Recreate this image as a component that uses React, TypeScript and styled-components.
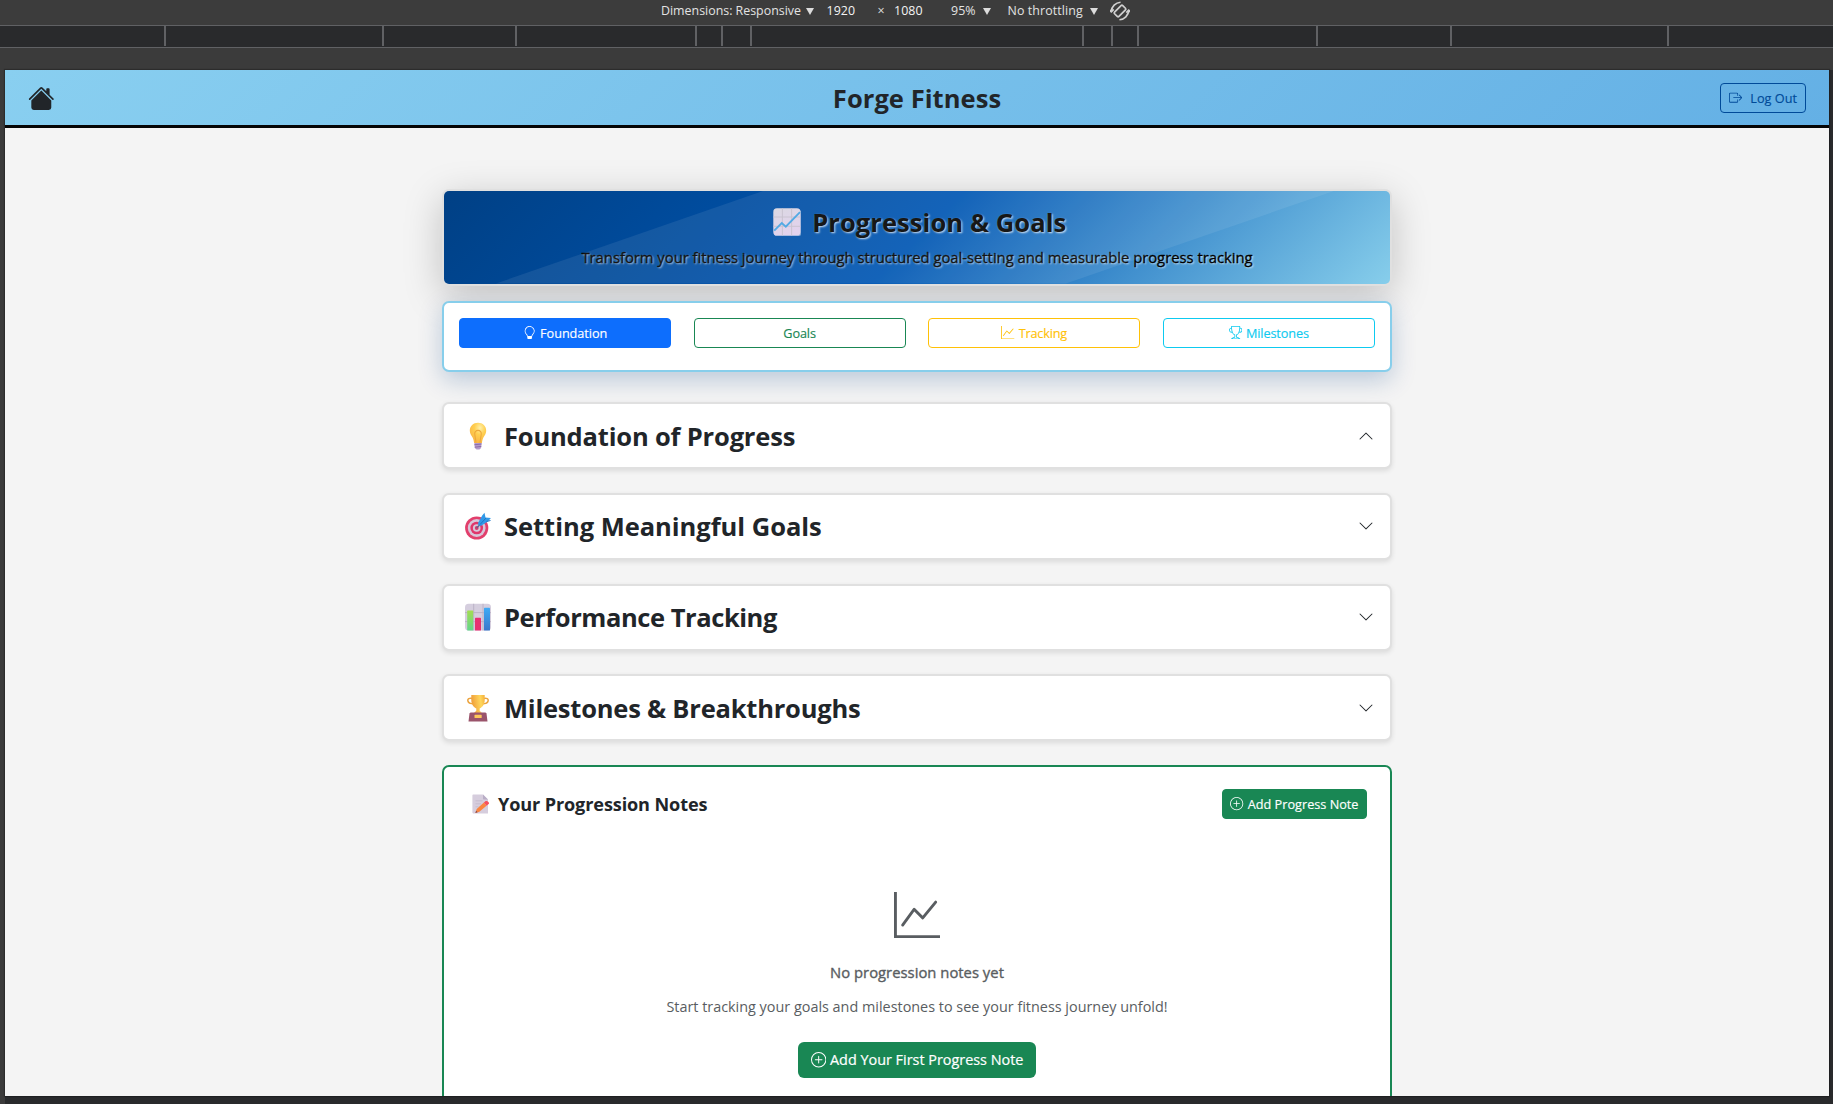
import React from "react";
import styled, { createGlobalStyle, css } from "styled-components";
import {
  BsBoxArrowRight,
  BsChevronDown,
  BsChevronUp,
  BsGraphUp,
  BsHouseFill,
  BsLightbulb,
  BsPlusCircle,
  BsTrophy,
} from "react-icons/bs";

const GlobalStyle = createGlobalStyle`
  *, *::before, *::after { box-sizing: border-box; }
  body {
    margin: 0;
    overflow: hidden;
    background: #292a2c;
    color: #212529;
    font-family: "Open Sans", "Noto Sans", "Liberation Sans", sans-serif;
  }
  svg { display: block; flex: none; }
`;

/* ---------- device emulation chrome ---------- */

const Shell = styled.div`
  display: flex;
  flex-direction: column;
  height: 1104px;
  overflow: hidden;
`;

const DeviceBar = styled.div`
  display: flex;
  align-items: center;
  height: 25px;
  padding: 0 0 3px 661px;
  background: #3c3c3c;
  color: #e3e3e3;
  font-size: 12.4px;
  line-height: 20px;
  white-space: nowrap;
`;

const BarText = styled.span<{ $width: number; $gap?: number; $track?: number; $bright?: boolean }>`
  width: ${(p) => p.$width}px;
  margin-left: ${(p) => p.$gap ?? 0}px;
  letter-spacing: ${(p) => p.$track ?? 0}px;
  color: ${(p) => (p.$bright ? "#f4f4f4" : "inherit")};
`;

const Caret = styled.span`
  margin: 1px 0 0 6px;
  border: 4.5px solid transparent;
  border-top: 7px solid #dcdcdc;
  border-bottom: 0;
`;

const RotateSlot = styled.span`
  margin: -1px 0 0 12px;
`;

const Ruler = styled.div`
  display: flex;
  height: 23px;
  flex: none;
  background: #292a2c;
  border-top: 1px solid #606164;
  border-bottom: 1px solid #606164;
`;

const RulerSpan = styled.div<{ $width: number }>`
  width: ${(p) => p.$width}px;
  height: 20px;
  border-right: 2px solid #606164;
`;

const Stage = styled.div`
  display: flex;
  flex: 1;
  min-height: 0;
  padding: 22px 4px 8px 5px;
  background:
    linear-gradient(#292a2c, #292a2c) right bottom / calc(100% - 5px) 8px no-repeat,
    linear-gradient(#292a2c, #292a2c) right bottom / 4px calc(100% - 22px) no-repeat,
    #3b3b3b;
`;

/* ---------- page ---------- */

const Page = styled.div`
  flex: 1;
  min-width: 0;
  overflow: hidden;
  background: #f4f4f4;
  box-shadow: 0 0 1px 1px rgba(0, 0, 0, 0.25);
`;

const Header = styled.header`
  display: grid;
  grid-template-columns: 1fr auto 1fr;
  align-items: center;
  height: 58px;
  padding: 1px 23px 0;
  border-bottom: 3px solid #050505;
  background: linear-gradient(135deg, #89cff0 0%, #64b0e5 100%);
`;

const headingText = css`
  font-weight: 700;
  font-size: 25.5px;
  line-height: 36px;
  white-space: nowrap;
`;

const Brand = styled.h1`
  ${headingText}
  margin: 0;
  letter-spacing: 0.06px;
`;

const OutlineButton = styled.button<{ $color: string; $filled?: boolean; $track?: number; $gap?: number }>`
  display: flex;
  align-items: center;
  justify-content: center;
  gap: ${(p) => p.$gap ?? 4}px;
  height: 29.5px;
  padding: 0 7.5px;
  border: 1px solid ${(p) => p.$color};
  border-radius: 4px;
  background: ${(p) => (p.$filled ? p.$color : "transparent")};
  color: ${(p) => (p.$filled ? "#fff" : p.$color)};
  font: 400 12.7px/18px "Open Sans", "Noto Sans", sans-serif;
  letter-spacing: ${(p) => p.$track ?? 0}px;
  white-space: nowrap;
  -webkit-text-stroke: 0.15px currentColor;
`;

const LogOut = styled(OutlineButton)`
  justify-self: end;
  width: 86px;
`;

const Column = styled.main`
  display: flex;
  flex-direction: column;
  width: 950px;
  margin: 61px auto 0;
`;

const Banner = styled.section`
  height: 97px;
  border: 2px solid #e0e0e0;
  border-radius: 7px;
  background: #e0e0e0;
  box-shadow: 0 10px 38px rgba(0, 0, 0, 0.21);
`;

const BannerFill = styled.div`
  position: relative;
  display: flex;
  flex-direction: column;
  align-items: center;
  height: 92.5px;
  padding-top: 12.5px;
  border-radius: 5px;
  overflow: hidden;
  color: #040404;
  text-shadow: 1px 1px 2px rgba(255, 255, 255, 0.8);
  background: linear-gradient(135deg, #004085 0%, #0056b3 50%, #87ceeb 100%);

  &::after {
    content: "";
    position: absolute;
    inset: 0;
    background: rgba(255, 255, 255, 0.08);
    clip-path: polygon(319px 0, 890px 0, 622px 100%, 52px 100%);
  }
`;

const BannerTitle = styled.h2`
  ${headingText}
  display: flex;
  align-items: center;
  gap: 11.5px;
  margin: 0 0 6px 5px;
  letter-spacing: 0.08px;
`;

const BannerLead = styled.p`
  margin: 0;
  color: #000;
  font-size: 14.8px;
  line-height: 22px;
  letter-spacing: -0.01px;
  white-space: nowrap;
  -webkit-text-stroke: 0.3px #000;
`;

const TabCard = styled.nav`
  display: grid;
  grid-template-columns: repeat(4, 212px);
  gap: 22.6px;
  align-items: start;
  height: 71px;
  margin-top: 15px;
  padding: 15px;
  border: 2px solid #87ceeb;
  border-radius: 7px;
  background: #fff;
  box-shadow: 0 8px 24px rgba(0, 64, 133, 0.24);
`;

const SectionList = styled.div`
  display: flex;
  flex-direction: column;
  gap: 23.6px;
  margin-top: 30.4px;
`;

const SectionCard = styled.section`
  display: flex;
  align-items: center;
  height: 67px;
  padding: 0 16px 0 21px;
  border: 2px solid #e0e0e0;
  border-radius: 7px;
  background: #fff;
  box-shadow: 0 2px 5px rgba(0, 0, 0, 0.1);
`;

const SectionTitle = styled.h2<{ $track: number }>`
  ${headingText}
  flex: 1;
  margin: 0 0 0 13px;
  letter-spacing: ${(p) => p.$track}px;
`;

const NotesCard = styled.section`
  flex: none;
  height: 420px;
  margin-top: 23.6px;
  padding: 22.5px 23px;
  border: 2px solid #198754;
  border-radius: 7px;
  background: #fff;
`;

const NotesHead = styled.div`
  display: flex;
  align-items: center;
  height: 29.5px;
`;

const NotesTitle = styled.h3`
  flex: 1;
  margin: 0 0 0 8px;
  font-weight: 700;
  font-size: 18.1px;
  line-height: 26px;
  letter-spacing: -0.12px;
`;

const NoteIconSlot = styled.span`
  margin-left: 5px;
`;

const Empty = styled.div`
  display: flex;
  flex-direction: column;
  align-items: center;
  margin-top: 73px;
  color: #595d61;
`;

const EmptyTitle = styled.h4`
  margin: 23.5px 0 0;
  font-weight: 400;
  font-size: 14.8px;
  line-height: 22px;
  letter-spacing: 0.02px;
  -webkit-text-stroke: 0.35px #595d61;
`;

const EmptyText = styled.p`
  margin: 13px 0 0;
  font-size: 14.4px;
  line-height: 22px;
`;

const PrimaryButton = styled.button`
  display: flex;
  align-items: center;
  justify-content: center;
  gap: 4px;
  width: 238px;
  height: 36.5px;
  margin-top: 23.5px;
  border: 0;
  border-radius: 6px;
  background: #198754;
  color: #fff;
  font: 400 14.4px/22px "Open Sans", "Noto Sans", sans-serif;
  white-space: nowrap;
  -webkit-text-stroke: 0.2px #fff;
`;

/* ---------- drawings ---------- */

const RotateIcon = () => (
  <svg width="20" height="20" viewBox="0 0 20 20" fill="none" stroke="#cfcfcf" strokeWidth="1.7">
    <g transform="rotate(45 10 10)">
      <rect x="6.9" y="4.2" width="6.2" height="11.6" rx="1.2" />
      <path d="M4.2 16.6C.9 12.800.9 7.200 4.200 3.400M15.800 3.400c3.300 3.800 3.300 9.400 0 13.200" />
      <path d="M4.400 13.300v3.400H1.200M15.600 6.700V3.300h3.200" />
    </g>
  </svg>
);

const ChartUpEmoji = () => (
  <svg width="28" height="28" viewBox="0 0 28 28">
    <defs>
      <linearGradient id="paper" x1="0" y1="0" x2="0.4" y2="1">
        <stop offset="0" stopColor="#d9d6e0" />
        <stop offset="1" stopColor="#e0cfec" />
      </linearGradient>
    </defs>
    <rect x="1" y="1.5" width="27.5" height="27" rx="4" fill="#fff" opacity="0.4" />
    <rect x="0.3" y="0.3" width="27.2" height="27.2" rx="3.6" fill="url(#paper)" />
    <path d="M9.4.3v27.2M18.6.3v27.2M.3 9h27.2M.3 18.3h27.2" stroke="#c3bccb" strokeWidth="0.9" />
    <path d="M1.2 22.6 8.8 15l4 3.6L27 4.2" fill="none" stroke="#45a3e2" strokeWidth="1.9" />
  </svg>
);

const BulbEmoji = () => (
  <svg width="26" height="28" viewBox="0 0 26 28">
    <defs>
      <radialGradient id="glass" cx="0.62" cy="0.25" r="0.75">
        <stop offset="0" stopColor="#fff0a8" />
        <stop offset="0.45" stopColor="#ffcf50" />
        <stop offset="1" stopColor="#f9b545" />
      </radialGradient>
    </defs>
    <path d="M13 .8c-4.8 0-8.2 3.5-8.2 7.9 0 3 1.6 4.8 2.8 6.8.8 1.4 1.2 3.6 1.5 5.6h7.8c.3-2 .7-4.2 1.5-5.6 1.2-2 2.8-3.8 2.8-6.8C21.2 4.3 17.8.8 13 .8z" fill="url(#glass)" />
    <path d="M11 20.5 9.8 12.5a3.3 3.3 0 1 1 6.4 0L15 20.5" fill="none" stroke="#eda83b" strokeWidth="1.1" />
    <path d="M9.3 21h7.4l-.6 5-1.6 1.600h-3L9.900 26z" fill="#b49aca" />
    <path d="M9.3 22.8l7.2-.8M9.700 25.200l6.600-.8" stroke="#8767a5" strokeWidth="0.9" />
  </svg>
);

const TargetEmoji = () => (
  <svg width="26" height="28" viewBox="0 0 26 28">
    <circle cx="11.7" cy="16" r="11.6" fill="#e23f6c" />
    <circle cx="11.7" cy="16" r="8.9" fill="#d7c6da" />
    <circle cx="11.7" cy="16" r="6.3" fill="#e0356b" />
    <circle cx="11.7" cy="16" r="3.8" fill="#d7c6da" />
    <circle cx="11.7" cy="16" r="1.9" fill="#d83a70" />
    <path d="M11.7 16 20 7.6" stroke="#6b5f86" strokeWidth="1.4" />
    <path d="m13 11 4.2-7.6L19.5.8l1 4.6 5.4.6-3 3.4-6.700 4.400-2.700-.2z" fill="#3199e8" />
    <path d="m15 12.5 6-6.500M21.500 9.500l4-1" stroke="#1f74c4" strokeWidth="1" />
  </svg>
);

const BarsEmoji = () => (
  <svg width="26" height="28" viewBox="0 0 26 28">
    <defs>
      <linearGradient id="green" x1="0" y1="0" x2="0" y2="1">
        <stop offset="0" stopColor="#a3dd52" />
        <stop offset="1" stopColor="#62d58b" />
      </linearGradient>
      <linearGradient id="blue" x1="0" y1="0" x2="0" y2="1">
        <stop offset="0" stopColor="#3fabf6" />
        <stop offset="1" stopColor="#3a78cb" />
      </linearGradient>
    </defs>
    <rect y="0.8" width="26" height="26.7" rx="3.5" fill="#d5cede" />
    <path d="M8.7.8v26.7M18 .8v26.7M0 9.6h26M0 18.6h26" stroke="#b9b0c4" strokeWidth="0.9" />
    <rect x="2.2" y="7.6" width="6" height="19.9" rx="0.6" fill="url(#green)" />
    <rect x="10" y="14.8" width="6" height="12.7" rx="0.6" fill="#e82f71" />
    <rect x="19" y="4.7" width="6" height="22.8" rx="0.6" fill="url(#blue)" />
  </svg>
);

const CupEmoji = () => (
  <svg width="26" height="28" viewBox="0 0 26 28">
    <defs>
      <linearGradient id="gold" x1="0" y1="0.5" x2="1" y2="0.3">
        <stop offset="0" stopColor="#ee9a37" />
        <stop offset="0.7" stopColor="#ffd75c" />
        <stop offset="1" stopColor="#f6b540" />
      </linearGradient>
    </defs>
    <path d="M7.5 4.5C4 3.8 2.6 5 2.8 6.6c.3 2 2.9 3.2 6 3.2M18.5 4.5c3.5-.7 4.9.5 4.7 2.1-.3 2-2.900 3.200-6 3.200" fill="none" stroke="#eba33d" strokeWidth="1.5" />
    <path d="M6.3.9h13.4v5.4c0 4-2.5 7.3-5 8.2v2.2l2.3 2.2H9l2.3-2.200v-2.200c-2.500-.9-5-4.200-5-8.200z" fill="url(#gold)" />
    <path d="M5.5 18.5h15l1 1 1 8H3.5l1-8z" fill="#9a546b" />
    <rect x="9.5" y="20.8" width="7.2" height="3.2" rx="0.6" fill="#fdc75a" />
  </svg>
);

const MemoEmoji = () => (
  <svg width="18" height="20" viewBox="0 0 18 20">
    <path d="M1.2.6H11l5 5v13.8H1.2a.8.8 0 0 1-.8-.8V1.4a.8.8 0 0 1 .8-.8z" fill="#d6cddd" />
    <path d="M11 .6v4.2a.8.8 0 0 0 .8.8H16z" fill="#b9aec6" />
    <path d="M3.5 6.8h7M3.5 9.8h5.500M3.500 12.800h3" stroke="#c3b8cc" strokeWidth="0.8" />
    <path d="m3.4 18.9 1.3-4 7.2-6.3 2.6 3.1-7.1 6.1z" fill="#fa8540" />
    <path d="m11.9 8.6 1.8-1.5c1.6-1 4.4 1.7 2.900 3l-2.100 1.600z" fill="#f7505e" />
    <path d="m3.4 18.9.7-2.2 1.5 1.500z" fill="#7c4350" />
  </svg>
);

/* ---------- data ---------- */

const rulerSpans = [166, 218, 133, 180, 26, 29, 332, 29, 26, 179, 134, 217];

const tabs = [
  { label: "Foundation", color: "#0d6efd", filled: true, icon: <BsLightbulb size={13.3} />, track: -0.06 },
  { label: "Goals", color: "#198754", track: -0.1 },
  { label: "Tracking", color: "#ffc107", icon: <BsGraphUp size={13.3} />, track: -0.22 },
  { label: "Milestones", color: "#0dcaf0", icon: <BsTrophy size={13.3} />, track: -0.12 },
];

const sections = [
  { title: "Foundation of Progress", icon: <BulbEmoji />, track: -0.17, open: true },
  { title: "Setting Meaningful Goals", icon: <TargetEmoji />, track: -0.02 },
  { title: "Performance Tracking", icon: <BarsEmoji />, track: -0.43 },
  { title: "Milestones & Breakthroughs", icon: <CupEmoji />, track: -0.21 },
];

export default function App() {
  return (
    <Shell>
      <GlobalStyle />
      <DeviceBar>
        <BarText $width={139}>Dimensions: Responsive</BarText>
        <Caret />
        <BarText $width={28} $gap={12.5} $track={0.1} $bright>1920</BarText>
        <BarText $width={9} $gap={23}>×</BarText>
        <BarText $width={28} $gap={7.5} $track={0.1} $bright>1080</BarText>
        <BarText $width={26} $gap={29} $track={0.1}>95%</BarText>
        <Caret />
        <BarText $width={76} $gap={16.5} $track={0.1}>No throttling</BarText>
        <Caret />
        <RotateSlot>
          <RotateIcon />
        </RotateSlot>
      </DeviceBar>
      <Ruler>
        {rulerSpans.map((width, i) => (
          <RulerSpan key={i} $width={width} />
        ))}
      </Ruler>
      <Stage>
        <Page>
          <Header>
            <BsHouseFill size={26.6} />
            <Brand>Forge Fitness</Brand>
            <LogOut $color="#004a99" $gap={8}>
              <BsBoxArrowRight size={13.3} />
              Log Out
            </LogOut>
          </Header>
          <Column>
            <Banner>
              <BannerFill>
                <BannerTitle>
                  <ChartUpEmoji />
                  Progression &amp; Goals
                </BannerTitle>
                <BannerLead>
                  Transform your fitness journey through structured goal-setting and measurable progress tracking
                </BannerLead>
              </BannerFill>
            </Banner>
            <TabCard>
              {tabs.map((tab) => (
                <OutlineButton key={tab.label} $color={tab.color} $filled={tab.filled} $track={tab.track}>
                  {tab.icon}
                  {tab.label}
                </OutlineButton>
              ))}
            </TabCard>
            <SectionList>
              {sections.map((section) => (
                <SectionCard key={section.title}>
                  {section.icon}
                  <SectionTitle $track={section.track}>{section.title}</SectionTitle>
                  {section.open ? <BsChevronUp size={16} /> : <BsChevronDown size={16} />}
                </SectionCard>
              ))}
            </SectionList>
            <NotesCard>
              <NotesHead>
                <NoteIconSlot>
                  <MemoEmoji />
                </NoteIconSlot>
                <NotesTitle>Your Progression Notes</NotesTitle>
                <OutlineButton $color="#198754" $filled>
                  <BsPlusCircle size={13.3} />
                  Add Progress Note
                </OutlineButton>
              </NotesHead>
              <Empty>
                <BsGraphUp size={46} />
                <EmptyTitle>No progression notes yet</EmptyTitle>
                <EmptyText>Start tracking your goals and milestones to see your fitness journey unfold!</EmptyText>
                <PrimaryButton>
                  <BsPlusCircle size={15.4} />
                  Add Your First Progress Note
                </PrimaryButton>
              </Empty>
            </NotesCard>
          </Column>
        </Page>
      </Stage>
    </Shell>
  );
}
